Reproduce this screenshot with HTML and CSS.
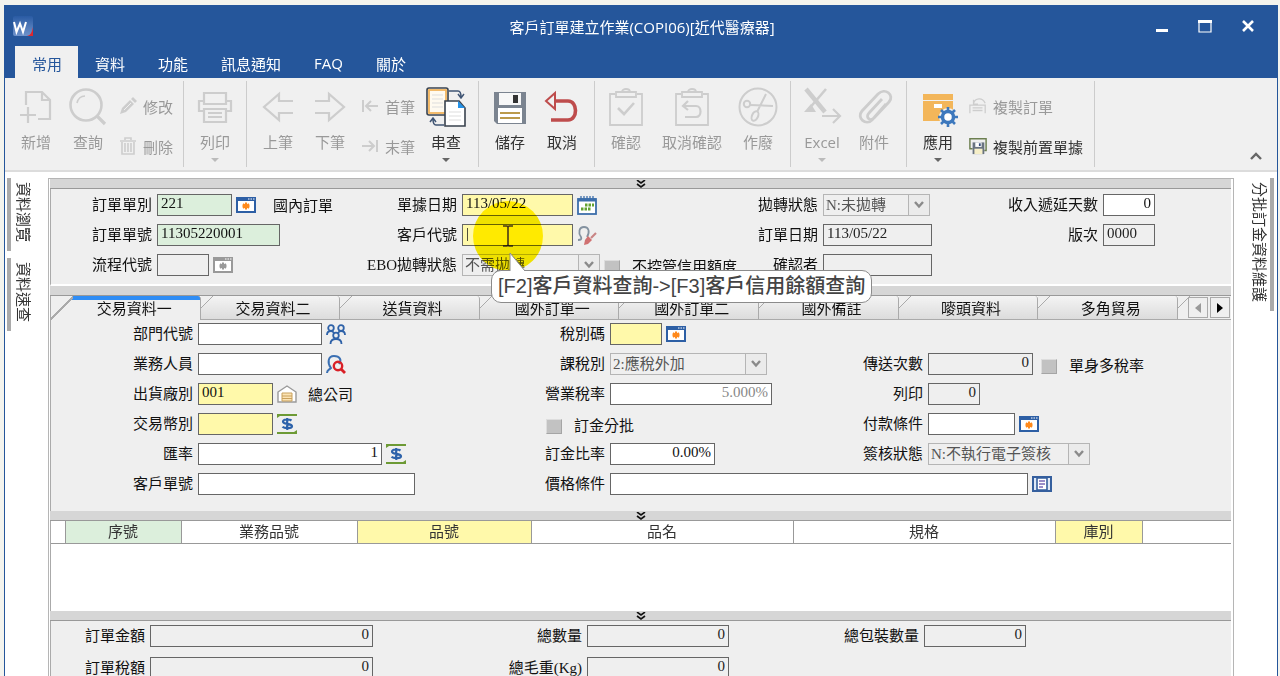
FILE: index.html
```html
<!DOCTYPE html>
<html lang="zh-Hant">
<head>
  <meta charset="UTF-8">
  <meta name="viewport" content="width=device-width, initial-scale=1.0">
  <title>客戶訂單建立作業</title>
  <link rel="stylesheet" href="styles.css">
</head>
<body>
  <!-- shared icons -->
  <svg class="defs" width="0" height="0" aria-hidden="true">
    <symbol id="i-window" viewBox="0 0 20 16">
      <rect x="1" y="1" width="18" height="14" fill="#fff" stroke="currentColor" stroke-width="2"/>
      <path d="M0 0h20v4H0z" fill="currentColor" stroke="none"/>
      <path d="M12 2h1.500M14.500 2h1.500M17 2h1.500" stroke="#fff" stroke-width="1"/>
      <path d="M10 5.500v7M7 7l6 4M13 7l-6 4M6.500 9h7" stroke-width="2"/>
    </symbol>
    <symbol id="i-money" viewBox="0 0 20 20">
      <path d="M0 0h20v2h-17l-3 2v-2h0zM20 20H0v-2h17l3-2z" fill="#6d9a35"/>
      <path d="M14.500 6.500c-2-1.500-8.500-1.500-8.500 1.200 0 2.800 9 1.500 9 4.500 0 2.600-7.500 2.400-9.500 .6M10.200 4v12" fill="none" stroke="#2d62aa" stroke-width="2.200"/>
    </symbol>
    <symbol id="i-down" viewBox="0 0 10 8">
      <path d="M1 0l4 3 4-3M1 4l4 3 4-3" fill="none" stroke="#111" stroke-width="1.600"/>
    </symbol>
    <symbol id="i-arrow" viewBox="0 0 10 8">
      <path d="M1 1l4 4.500L9 1" fill="none" stroke="#8a8a8a" stroke-width="2.400"/>
    </symbol>
    <symbol id="i-board" viewBox="0 0 40 40">
      <path d="M9 7H4v31h32V7h-5M10 5h20v5H10zM16 5c0-4 8-4 8 0" fill="none" stroke="currentColor" stroke-width="1.800"/>
    </symbol>
  </svg>

  <div class="window">
    <header class="titlebar">
      <svg class="app-logo" viewBox="0 0 20 20"><defs><linearGradient id="lg" x2="0" y2="1"><stop stop-color="#2a5ba4"/><stop offset="1" stop-color="#6f93cb"/></linearGradient></defs><rect width="20" height="20" rx="2" fill="url(#lg)"/><path d="M1 6l2.500 10L7 7.500l3 8.500 3-10" fill="none" stroke="#fff" stroke-width="2"/><path d="M20 11v9h-6c4-1 5-4 6-9z" fill="#e0262c"/></svg>
      <h1>客戶訂單建立作業(COPI06)[近代醫療器]</h1>
      <div class="window-buttons">
        <button type="button" aria-label="最小化"><svg viewBox="0 0 14 14"><path d="M1 10h12v3H1z" fill="#fff"/></svg></button>
        <button type="button" aria-label="最大化"><svg viewBox="0 0 14 14"><path d="M1 2h12v11H1z" fill="none" stroke="#fff" stroke-width="1.200"/><path d="M0 1h14v3H0z" fill="#fff"/></svg></button>
        <button type="button" aria-label="關閉"><svg viewBox="0 0 14 14"><path d="M2 2l10 10M12 2L2 12" stroke="#fff" stroke-width="2.600"/></svg></button>
      </div>
    </header>

    <nav class="menu">
      <button type="button" class="active">常用</button>
      <button type="button">資料</button>
      <button type="button">功能</button>
      <button type="button">訊息通知</button>
      <button type="button">FAQ</button>
      <button type="button">關於</button>
    </nav>

    <div class="ribbon">
      <div class="group">
        <button type="button" class="big" disabled>
          <svg viewBox="0 0 40 40"><path d="M10 18V5h16l8 8v19H22M26 5v8h8M12 20v16M4 28h16" fill="none" stroke="currentColor" stroke-width="2.200"/></svg>
          <span>新增</span>
        </button>
        <button type="button" class="big" disabled>
          <svg viewBox="0 0 40 40"><circle cx="18" cy="18" r="15.500" fill="none" stroke="currentColor" stroke-width="2.600"/><path d="M9 16c1-4 4-7 8-7" fill="none" stroke="currentColor" stroke-width="1.600"/><path d="M29 29l8 8" stroke="currentColor" stroke-width="3.200"/></svg>
          <span>查詢</span>
        </button>
        <div class="stack">
          <button type="button" class="small" disabled><svg viewBox="0 0 18 18"><path d="M1 17l2-6 8-8 4 4-8 8z" fill="currentColor"/><path d="M12 2l2-2 4 4-2 2z" fill="currentColor"/><path d="M5 13l7-7" stroke="#f0f0f0"/></svg>修改</button>
          <button type="button" class="small" disabled><svg viewBox="0 0 18 18"><path d="M1 4h16M6 3V1h6v2M3 5v12h12V5M6 6v9M9 6v9M12 6v9" fill="none" stroke="currentColor" stroke-width="1.600"/></svg>刪除</button>
        </div>
      </div>

      <div class="group">
        <button type="button" class="big" disabled>
          <svg viewBox="0 0 40 40"><path d="M9 14V6h22v8M8 24H4V14h5v3h22v-3h5v10h-4M9 22h22v13H9zM13 26h14M13 30h14" fill="none" stroke="currentColor" stroke-width="2.200"/></svg>
          <span>列印</span><i class="caret"></i>
        </button>
      </div>

      <div class="group">
        <button type="button" class="big" disabled>
          <svg viewBox="0 0 40 40"><path d="M35 14H21V7L6 20l15 13v-7h14" fill="none" stroke="currentColor" stroke-width="2.200"/></svg>
          <span>上筆</span>
        </button>
        <button type="button" class="big" disabled>
          <svg viewBox="0 0 40 40"><path d="M5 14h14V7l15 13-15 13v-7H5" fill="none" stroke="currentColor" stroke-width="2.200"/></svg>
          <span>下筆</span>
        </button>
        <div class="stack">
          <button type="button" class="small" disabled><svg viewBox="0 0 18 18"><path d="M2 3v12M17 9H5M10 4L5 9l5 5" fill="none" stroke="currentColor" stroke-width="2"/></svg>首筆</button>
          <button type="button" class="small" disabled><svg viewBox="0 0 18 18"><path d="M16 3v12M1 9h12M8 4l5 5-5 5" fill="none" stroke="currentColor" stroke-width="2"/></svg>末筆</button>
        </div>
        <button type="button" class="big">
          <svg viewBox="0 0 40 40"><rect x="1" y="1" width="21" height="27" rx="2" fill="#fff" stroke="#39424e" stroke-width="1.600"/><rect x="3" y="3" width="17" height="23" fill="#fffaf0" stroke="#f2b45c" stroke-width="1.800"/><path d="M6 8h11M6 12h11M6 16h11M6 20h11" stroke="#ddd"/><path d="M19 14h14l6 7v18H19z" fill="#fff" stroke="#39424e" stroke-width="1.600"/><path d="M32 14v7h7z" fill="#2492e8"/><path d="M23 25h12M23 29h12M23 33h12" stroke="#ddd"/><path d="M23 4h9q3 0 3 6M32 7l3 4 3-4M18 38h-8q-3 0-3-6M4 35l3-4 3 4" fill="none" stroke="#405574" stroke-width="1.500"/></svg>
          <span>串查</span><i class="caret"></i>
        </button>
      </div>

      <div class="group">
        <button type="button" class="big">
          <svg viewBox="0 0 40 40"><path d="M4 5h32v32H7l-3-3z" fill="#7b8490"/><path d="M9 6h22v12H9z" fill="#f7f7f7"/><path d="M23 8h5v8h-5z" fill="#333"/><path d="M8 21h24v15H8z" fill="#fff"/><path d="M10 26h20M10 31h20" stroke="#bb9a4b" stroke-width="1.800"/></svg>
          <span>儲存</span>
        </button>
        <button type="button" class="big">
          <svg viewBox="0 0 40 40"><path d="M12 14h14c10 0 10 19 0 19H9" fill="none" stroke="#be4c4c" stroke-width="3.600"/><path d="M13 6v16L4 14z" fill="#f0f0f0" stroke="#be4c4c" stroke-width="2"/></svg>
          <span>取消</span>
        </button>
      </div>

      <div class="group">
        <button type="button" class="big" disabled>
          <svg viewBox="0 0 40 40"><use href="#i-board"/><path d="M12 21l6 6 10-11" fill="none" stroke="currentColor" stroke-width="2.600"/></svg>
          <span>確認</span>
        </button>
        <button type="button" class="big wide" disabled>
          <svg viewBox="0 0 40 40"><use href="#i-board"/><path d="M16 14l-5 5 5 4M12 19h12c6 0 6 11 0 11H13" fill="none" stroke="currentColor" stroke-width="2.200"/></svg>
          <span>取消確認</span>
        </button>
        <button type="button" class="big" disabled>
          <svg viewBox="0 0 40 40"><g fill="none" stroke="currentColor" stroke-width="2"><circle cx="20" cy="20" r="18.500"/><circle cx="9" cy="17" r="3.200"/><ellipse cx="17" cy="29" rx="3" ry="5" transform="rotate(25 17 29)"/><path d="M12 18l23 1M19 25L28 7"/></g></svg>
          <span>作廢</span>
        </button>
      </div>

      <div class="group">
        <button type="button" class="big" disabled>
          <svg viewBox="0 0 40 40"><g fill="none" stroke="currentColor"><path d="M4 2l19 23" stroke-width="4.500"/><path d="M24 2L6 23" stroke-width="2.600"/><path d="M20 29h18M31 22l7 7-7 7" stroke-width="2.200"/></g><path d="M2 25l7-8 5 8z" fill="currentColor"/></svg>
          <span>Excel</span><i class="caret"></i>
        </button>
        <button type="button" class="big" disabled>
          <svg viewBox="0 0 40 40"><path d="M32 17L18 33c-6 6-16-2-10-9L24 7c7-7 17 1 11 8L20 31c-4 4-9-1-5-5l13-14" fill="none" stroke="currentColor" stroke-width="2.800"/></svg>
          <span>附件</span>
        </button>
      </div>

      <div class="group">
        <button type="button" class="big">
          <svg viewBox="0 0 40 40"><path d="M5 7h30v6H5z" fill="#f3b65a"/><path d="M5 14h30v20H5z" fill="#f3b65a"/><path d="M16 17h8v4h-8z" fill="#fff"/><circle cx="30" cy="30" r="9" fill="#f0f0f0"/><circle cx="30" cy="30" r="5.500" fill="#fff" stroke="#3d78bd" stroke-width="3.500"/><path d="M30 20v4M30 36v4M20 30h4M36 30h4M23 23l3 3M34 34l3 3M37 23l-3 3M26 34l-3 3" stroke="#3d78bd" stroke-width="2.600"/></svg>
          <span>應用</span><i class="caret"></i>
        </button>
        <div class="stack">
          <button type="button" class="small" disabled><svg viewBox="0 0 20 20"><path d="M1 18V9h17v9M4 12h11M4 15h11M5 7c2-6 10-7 13 0M5 3v5h5" fill="none" stroke="currentColor" stroke-width="1.400"/></svg>複製訂單</button>
          <button type="button" class="small"><svg viewBox="0 0 20 20"><path d="M4 13H1V2h18v13h-2" fill="none" stroke="#6c7f50" stroke-width="1.600"/><path d="M4 6h13v13H4z" fill="#697380"/><path d="M7 6h7v5H7z" fill="#fff"/><path d="M11 7h2v3h-2z" fill="#334a7a"/><path d="M6 13h9v6H6z" fill="#f6efc8"/></svg>複製前置單據</button>
        </div>
      </div>
      <button type="button" class="collapse" aria-label="收合"><svg viewBox="0 0 12 8"><path d="M1 7l5-5 5 5" fill="none" stroke="#666" stroke-width="2.400"/></svg></button>
    </div>

    <div class="workspace">
      <aside class="side left">
        <button type="button">資料瀏覽</button>
        <button type="button">資料速查</button>
      </aside>

      <main class="panel">
        <div class="splitter"><svg><use href="#i-down"/></svg></div>

        <section class="form order">
          <div class="col">
            <div class="row"><label for="type">訂單單別</label><input id="type" class="key w75" value="221"><button type="button" class="pick" aria-label="選擇單別"><svg class="win"><use href="#i-window"/></svg></button><span class="note">國內訂單</span></div>
            <div class="row"><label for="no">訂單單號</label><input id="no" class="key w123" value="11305220001"></div>
            <div class="row"><label for="flow">流程代號</label><input id="flow" class="w52" disabled><button type="button" class="pick" disabled aria-label="選擇流程"><svg class="win"><use href="#i-window"/></svg></button></div>
          </div>
          <div class="col">
            <div class="row"><label for="date">單據日期</label><input id="date" class="must w111" value="113/05/22"><button type="button" class="pick" aria-label="日曆"><svg viewBox="0 0 20 20"><rect x="1" y="4" width="18" height="15" fill="#fff" stroke="#3c6eaa" stroke-width="1.800"/><path d="M1 5h18" stroke="#3c6eaa" stroke-width="3"/><path d="M4 1v5M7 1v5M10 1v5M13 1v5M16 1v5" stroke="#3c6eaa" stroke-width="1.300"/><path d="M8 10h9M4 14h10" stroke="#63a22f" stroke-width="3" stroke-dasharray="2.500 1"/></svg></button></div>
            <div class="row"><label for="cust">客戶代號</label><input id="cust" class="must w111" value="|"><button type="button" class="pick" aria-label="客戶查詢"><svg viewBox="0 0 20 20"><path d="M1 15c3 0 4-1 3-3-3-4-2-10 3-10s6 5 3 10" fill="none" stroke="#8492a0" stroke-width="1.800"/><path d="M19 8l-5 5" stroke="#c98585" stroke-width="2.200"/><path d="M11 11l4 4-4 4-4 1 1-5z" fill="#d07171"/></svg></button></div>
            <div class="row"><label for="ebo">EBO拋轉狀態</label><span class="select w138"><select id="ebo" disabled><option>不需拋轉</option></select><svg><use href="#i-arrow"/></svg></span><input type="checkbox" id="credit" disabled><label for="credit" class="after">不控管信用額度</label></div>
          </div>
          <div class="col">
            <div class="row"><label for="state">拋轉狀態</label><span class="select w107"><select id="state" disabled><option>N:未拋轉</option></select><svg><use href="#i-arrow"/></svg></span></div>
            <div class="row"><label for="odate">訂單日期</label><input id="odate" class="w109" value="113/05/22" disabled></div>
            <div class="row"><label for="who">確認者</label><input id="who" class="w109" disabled></div>
          </div>
          <div class="col">
            <div class="row"><label for="days">收入遞延天數</label><input id="days" class="num w52" value="0"></div>
            <div class="row"><label for="ver">版次</label><input id="ver" class="w52" value="0000" disabled></div>
          </div>

          <div class="highlight"><svg viewBox="0 0 12 22"><path d="M1 1h4l1 1 1-1h4M6 2v18M1 21h4l1-1 1 1h4" fill="none" stroke="#4a3a20" stroke-width="1.600"/></svg></div>
          <div class="tip">[F2]客戶資料查詢-&gt;[F3]客戶信用餘額查詢
            <svg viewBox="0 0 20 20"><path d="M2 19V1l15 18" fill="#fff" stroke="#8b8b8b"/></svg>
          </div>
        </section>

        <div class="splitter"></div>
        <nav class="tabs">
          <button type="button" class="active">交易資料一</button>
          <button type="button">交易資料二</button>
          <button type="button">送貨資料</button>
          <button type="button">國外訂單一</button>
          <button type="button">國外訂單二</button>
          <button type="button">國外備註</button>
          <button type="button">嘜頭資料</button>
          <button type="button">多角貿易</button>
          <div class="scroll">
            <button type="button" disabled aria-label="上一頁籤"><svg viewBox="0 0 8 10"><path d="M7 0v10L1 5z" fill="currentColor"/></svg></button>
            <button type="button" aria-label="下一頁籤"><svg viewBox="0 0 8 10"><path d="M1 0v10l6-5z" fill="currentColor"/></svg></button>
          </div>
        </nav>

        <section class="form trade">
          <div class="col">
            <div class="row"><label for="dept">部門代號</label><input id="dept" class="w124"><button type="button" class="pick" aria-label="選擇部門"><svg viewBox="0 0 20 20" fill="none" stroke="#2f62a8" stroke-width="1.800"><circle cx="5" cy="4" r="2.800"/><circle cx="15" cy="4" r="2.800"/><circle cx="10" cy="11.500" r="2.800"/><path d="M1 11c0-3 2-4 4-4s2 1 3 2M19 11c0-3-2-4-4-4s-2 1-3 2M4.500 20c0-3 2-5 5.500-5s5.500 2 5.500 5"/></svg></button></div>
            <div class="row"><label for="sales">業務人員</label><input id="sales" class="w124"><button type="button" class="pick" aria-label="選擇人員"><svg viewBox="0 0 20 20" fill="none"><path d="M1 19c0-3 2-3 4-5-4-5-3-12 3-12s8 4 5 8" stroke="#3b70b3" stroke-width="2"/><circle cx="12" cy="12" r="4.200" stroke="#d92027" stroke-width="2.400"/><path d="M15 15l4 4" stroke="#d92027" stroke-width="2.800"/></svg></button></div>
            <div class="row"><label for="plant">出貨廠別</label><input id="plant" class="must w75" value="001"><button type="button" class="pick" aria-label="選擇廠別"><svg viewBox="0 0 20 20"><path d="M1 8l9-6 9 6v10H1z" fill="#fff" stroke="#9a9a9a" stroke-width="1.400"/><path d="M5 9h10v8H5zM5 12h10M5 14.500h10" fill="#fbe3b4" stroke="#c9a15c"/></svg></button><span class="note near">總公司</span></div>
            <div class="row"><label for="cur">交易幣別</label><input id="cur" class="must w75"><button type="button" class="pick" aria-label="選擇幣別"><svg><use href="#i-money"/></svg></button></div>
            <div class="row"><label for="rate">匯率</label><input id="rate" class="num w184" value="1"><button type="button" class="pick" aria-label="查詢匯率"><svg><use href="#i-money"/></svg></button></div>
            <div class="row"><label for="po">客戶單號</label><input id="po" class="w217"></div>
          </div>
          <div class="main">
            <div class="cols">
              <div class="col">
                <div class="row"><label for="tax">稅別碼</label><input id="tax" class="must w52"><button type="button" class="pick" aria-label="選擇稅別"><svg class="win"><use href="#i-window"/></svg></button></div>
                <div class="row"><label for="kind">課稅別</label><span class="select w157"><select id="kind" disabled><option>2:應稅外加</option></select><svg><use href="#i-arrow"/></svg></span></div>
                <div class="row"><label for="vat">營業稅率</label><input id="vat" class="num faded w162" value="5.000%" readonly></div>
                <div class="row indent"><input type="checkbox" id="split" disabled><label for="split" class="after">訂金分批</label></div>
                <div class="row"><label for="ratio">訂金比率</label><input id="ratio" class="num w105" value="0.00%"></div>
              </div>
              <div class="col">
                <div class="row blank"></div>
                <div class="row"><label for="sent">傳送次數</label><input id="sent" class="num w105" value="0" disabled><input type="checkbox" id="multi" disabled><label for="multi" class="after">單身多稅率</label></div>
                <div class="row"><label for="print">列印</label><input id="print" class="num w52" value="0" disabled></div>
                <div class="row"><label for="pay">付款條件</label><input id="pay" class="w87"><button type="button" class="pick" aria-label="選擇付款條件"><svg class="win"><use href="#i-window"/></svg></button></div>
                <div class="row"><label for="sign">簽核狀態</label><span class="select w162"><select id="sign" disabled><option>N:不執行電子簽核</option></select><svg><use href="#i-arrow"/></svg></span></div>
              </div>
            </div>
            <div class="row"><label for="price">價格條件</label><input id="price" class="w418"><button type="button" class="pick" aria-label="選擇價格條件"><svg viewBox="0 0 20 16"><rect x="1" y="1" width="18" height="14" fill="#dfe9f6" stroke="#355f9e" stroke-width="2"/><path d="M5 2h10v12H5z" fill="#fff" stroke="#355f9e" stroke-width="1.600"/><path d="M7 5h6M7 8h6M7 11h4" stroke="#7a6ab8" stroke-width="1.400"/></svg></button></div>
          </div>
        </section>

        <div class="splitter"><svg><use href="#i-down"/></svg></div>
        <section class="items">
          <table>
            <colgroup><col class="c-mark"><col class="c-no"><col class="c-biz"><col class="c-item"><col class="c-name"><col class="c-name"><col class="c-wh"><col></colgroup>
            <thead>
              <tr><th></th><th class="key">序號</th><th>業務品號</th><th class="must">品號</th><th>品名</th><th>規格</th><th class="must">庫別</th><th></th></tr>
            </thead>
          </table>
        </section>

        <div class="splitter"><svg><use href="#i-down"/></svg></div>
        <section class="form totals">
          <div class="col">
            <div class="row"><label for="amt">訂單金額</label><input id="amt" class="num w223" value="0" disabled></div>
            <div class="row"><label for="taxamt">訂單稅額</label><input id="taxamt" class="num w223" value="0" disabled></div>
          </div>
          <div class="col">
            <div class="row"><label for="qty">總數量</label><input id="qty" class="num w142" value="0" disabled></div>
            <div class="row"><label for="kg">總毛重(Kg)</label><input id="kg" class="num w142" value="0" disabled></div>
          </div>
          <div class="col">
            <div class="row"><label for="pack">總包裝數量</label><input id="pack" class="num w102" value="0" disabled></div>
          </div>
        </section>
      </main>

      <aside class="side right">
        <button type="button">分批訂金資料維護</button>
      </aside>
    </div>
  </div>
</body>
</html>
```
FILE: styles.css
```css
* {
    box-sizing: border-box;
}

body {
    margin: 0;
    padding: 5px 2px 0 4px;
    height: 100vh;
    overflow: hidden;
    background-color: #f4f4ee;
    font-family: "Liberation Serif", "Noto Sans CJK TC", serif;
    font-size: 15px;
    color: #111;
}

button, input, select {
    font: inherit;
    color: inherit;
    margin: 0;
    padding: 0;
    border: 0;
    background: none;
}

.defs {
    position: absolute;
}

.window {
    display: flex;
    flex-direction: column;
    height: 100%;
    border: 1px solid #25569b;
    border-bottom: 0;
    background-color: #fff;
}

/* title bar */
.titlebar {
    display: grid;
    grid-template-columns: 1fr auto 1fr;
    align-items: center;
    height: 40px;
    padding: 0 22px 0 8px;
    background-color: #25569b;
    color: #fff;
}

.titlebar h1 {
    margin: 0;
    padding-left: 16px;
    font: 15px "Open Sans", "Noto Sans CJK TC", sans-serif;
}

.app-logo {
    width: 20px;
    height: 20px;
}

.window-buttons {
    display: flex;
    justify-content: flex-end;
    gap: 29px;
}

.window-buttons button {
    width: 14px;
    height: 14px;
}

.window-buttons svg {
    display: block;
}

.menu {
    display: flex;
    height: 32px;
    padding-left: 10px;
    background-color: #25569b;
    font-family: "Open Sans", "Noto Sans CJK TC", sans-serif;
}

.menu button {
    padding: 2px 16px 0 17px;
    color: #fff;
}

.menu button.active {
    background-color: #f0f0f0;
    color: #25569b;
}

/* ribbon */
.ribbon {
    display: flex;
    height: 94px;
    padding-top: 3px;
    background-color: #f0f0f0;
    border-bottom: 2px solid #dcdcdc;
    font-family: "Open Sans", "Noto Sans CJK TC", sans-serif;
    color: #333;
}

.group {
    display: flex;
    height: 86px;
    padding: 0 5px;
    border-right: 1px solid #ccc;
}

.group:nth-child(n+3) {
    padding-right: 6px;
}

.big {
    display: flex;
    flex-direction: column;
    align-items: center;
    width: 52px;
    padding-top: 6px;
}

.big.wide {
    width: 80px;
}

.big svg {
    width: 40px;
    height: 40px;
    flex: none;
}

.big span {
    margin-top: 5px;
    line-height: 20px;
}

.ribbon button:disabled {
    color: #999;
}

.ribbon button:disabled svg {
    color: #cdcdcd;
}

.caret {
    margin-top: 6px;
    border: 4px solid transparent;
    border-top-color: #666;
    border-bottom: 0;
}

button:disabled .caret {
    border-top-color: #bbb;
}

.stack {
    display: flex;
    flex-direction: column;
    gap: 20px;
    padding: 15px 5px 0;
}

.small {
    display: flex;
    align-items: center;
    gap: 6px;
    height: 20px;
    white-space: nowrap;
}

.small svg {
    width: 18px;
    height: 18px;
}

.collapse {
    margin: 0 15px 10px auto;
    align-self: flex-end;
    line-height: 0;
}

.collapse svg {
    width: 12px;
    height: 8px;
}

/* workspace */
.workspace {
    display: flex;
    flex: 1;
    min-height: 0;
    padding-top: 6px;
}

.side {
    display: flex;
    flex-direction: column;
    gap: 7px;
    width: 43px;
    color: #333;
}

.side button {
    writing-mode: vertical-rl;
    text-orientation: sideways;
    width: 27px;
    padding: 4px 0 9px;
    line-height: 22px;
    border-left: 4px solid #aaa;
    margin-left: 2px;
    text-align: left;
}

.side.right {
    align-items: flex-end;
}

.side.right button {
    border-left: 0;
    border-right: 4px solid #aaa;
    margin-right: 3px;
}

.panel {
    display: flex;
    flex-direction: column;
    flex: 1;
    min-width: 0;
    padding: 0 2px 0 1px;
    border: 1px solid #b5b5b5;
    border-bottom: 0;
}

.splitter {
    display: flex;
    justify-content: center;
    align-items: center;
    flex: none;
    height: 10px;
    background-color: #d6d6d6;
    border-bottom: 1px solid #999;
}

.splitter svg {
    width: 10px;
    height: 8px;
}

/* forms */
.form {
    position: relative;
    display: grid;
    background-color: #efefef;
    border-left: 1px solid #aaa;
}

.order {
    grid-template-columns: 299fr 385fr 225fr 271fr;
    padding: 5px 0 8px;
    border-bottom: 2px solid #fff;
}

.col, .main {
    display: flex;
    flex-direction: column;
    gap: 8px;
    min-width: 0;
}

.row {
    display: flex;
    align-items: center;
    height: 22px;
    gap: 4px;
    white-space: nowrap;
}

.row > * {
    flex: none;
}

.row > label {
    padding: 0 1px 4px 0;
}

.row > label:first-child {
    width: 102px;
    text-align: right;
}

.order .col:nth-child(2) label:first-child {
    width: 108px;
}

.order .col:nth-child(3) label:first-child {
    width: 84px;
}

.order .col:nth-child(4) label:first-child {
    width: 139px;
}

.row > input {
    height: 22px;
    padding: 0 3px 3px;
    border: 1px solid #666;
    background-color: #fff;
}

.row > input:disabled {
    background-color: #efefef;
    color: #222;
}

.row > input.key, th.key {
    background-color: #dcefdc;
}

.row > input.must, th.must {
    background-color: #fff9aa;
}

.row > input.num {
    text-align: right;
}

.row > input.faded {
    color: #888;
}

.row > input[type="checkbox"] {
    appearance: none;
    width: 16px;
    height: 15px;
    margin: 4px 0 0 4px;
    border: 1px solid #a5a5a5;
    border-color: #ddd #a5a5a5 #a5a5a5 #ddd;
    background-color: #c2c2c2;
}

.order .row > input[type="checkbox"] {
    margin-left: 0;
}

.row > .after {
    margin-left: 8px;
    padding-bottom: 0;
}

.note {
    margin-left: 13px;
    padding-bottom: 2px;
}

.note.near {
    margin-left: 7px;
}

.pick {
    display: flex;
    align-items: center;
    width: 20px;
    height: 20px;
    color: #2d5fa5;
}

.pick svg {
    width: 20px;
    height: 20px;
}

.pick svg.win {
    height: 16px;
    stroke: #ff8a1c;
}

.pick:disabled {
    color: #999;
}

.pick:disabled svg.win {
    stroke: #999;
}

.select {
    position: relative;
    display: flex;
    height: 22px;
    border: 1px solid #b5b5b5;
}

.select select {
    appearance: none;
    width: 100%;
    padding-left: 2px;
    color: #555;
    opacity: 1;
}

.select svg {
    position: absolute;
    top: 0;
    right: 0;
    width: 21px;
    height: 20px;
    padding: 6px 5px;
    border-left: 1px solid #b5b5b5;
    background-color: #ebebeb;
}

.w52 { width: 52px; }
.w75 { width: 75px; }
.w87 { width: 87px; }
.w102 { width: 102px; }
.w105 { width: 105px; }
.w107 { width: 107px; }
.w109 { width: 109px; }
.w111 { width: 111px; }
.w123 { width: 123px; }
.w124 { width: 124px; }
.w138 { width: 138px; }
.w142 { width: 142px; }
.w157 { width: 157px; }
.w162 { width: 162px; }
.w184 { width: 184px; }
.w217 { width: 217px; }
.w223 { width: 223px; }
.w418 { width: 418px; }

/* pointer highlight and hint bubble */
.highlight {
    position: absolute;
    top: 12px;
    left: 422px;
    display: flex;
    align-items: center;
    justify-content: center;
    width: 70px;
    height: 70px;
    border-radius: 50%;
    background-color: #fff000;
    mix-blend-mode: multiply;
}

.highlight svg {
    width: 12px;
    height: 22px;
}

.tip {
    position: absolute;
    z-index: 2;
    top: 81px;
    left: 440px;
    height: 33px;
    padding: 0 6px;
    border: 1px solid #8b8b8b;
    border-radius: 10px;
    background-color: #fff;
    color: #444;
    font: 500 20px/31px "Liberation Sans", "Noto Sans CJK TC", sans-serif;
    white-space: nowrap;
}

.tip svg {
    position: absolute;
    top: -19px;
    left: 16px;
    width: 20px;
    height: 20px;
}

/* tabs */
.tabs {
    display: grid;
    grid-template-columns: 150fr repeat(7, 140fr) 53px;
    flex: none;
    height: 24px;
    border-left: 1px solid #aaa;
}

.tabs > button {
    position: relative;
    padding: 2px 0 0 6px;
    line-height: 18px;
    border-right: 1px solid #aaa;
    border-bottom: 1px solid #aaa;
    border-radius: 0 3px 0 0;
    background: linear-gradient(#f4f4f4, #dcdcdc);
}

.tabs > button.active {
    padding-left: 18px;
    border-bottom: 0;
    background: linear-gradient(#2f8df5 4px, #efefef 4px);
}

.tabs > button::before, .scroll::before {
    content: "";
    position: absolute;
    top: 0;
    left: 0;
    width: 12px;
    height: 12px;
    background: linear-gradient(135deg, #efefef 47%, #aaa 47%, #aaa 54%, transparent 54%);
}

.tabs > button.active::before {
    width: 22px;
    height: 24px;
}

.scroll {
    position: relative;
    display: flex;
    gap: 2px;
    padding: 1px 0 1px 10px;
    background-color: #efefef;
    border-bottom: 1px solid #aaa;
}

.scroll button {
    width: 20px;
    height: 21px;
    line-height: 0;
    border: 1px solid #aaa;
    color: #000;
}

.scroll button:disabled {
    color: #999;
}

.scroll svg {
    width: 8px;
    height: 10px;
}

.trade {
    grid-template-columns: 449fr 731fr;
    padding: 3px 0 16px;
}

.trade .row > label:first-child {
    width: 143px;
}

.trade .main .row > label:first-child {
    width: 106px;
}

.cols {
    display: grid;
    grid-template-columns: 318fr 413fr;
}

.indent {
    padding-left: 42px;
}

/* order lines */
.items {
    flex: none;
    height: 90px;
    border-left: 1px solid #aaa;
    background-color: #fff;
}

.items table {
    width: 100%;
    table-layout: fixed;
    border-collapse: collapse;
}

.items th {
    height: 22px;
    padding: 0;
    line-height: 20px;
    font-weight: normal;
    color: #333;
    border-right: 1px solid #999;
    border-bottom: 1px solid #999;
}

.items th:last-child {
    border-right: 0;
}

.c-mark { width: 14px; }
.c-no { width: 116px; }
.c-biz { width: 176px; }
.c-item { width: 174px; }
.c-name { width: 262px; }
.c-wh { width: 87px; }

.totals {
    flex: 1;
    grid-template-columns: 429fr 340fr 411fr;
    align-content: start;
    padding-top: 4px;
}

.totals .col {
    gap: 10px;
}

.totals .row > label:first-child {
    width: 95px;
}

.totals .col + .col .row > label:first-child {
    width: 103px;
}

.totals .col:last-child .row > label:first-child {
    width: 100px;
}
```
